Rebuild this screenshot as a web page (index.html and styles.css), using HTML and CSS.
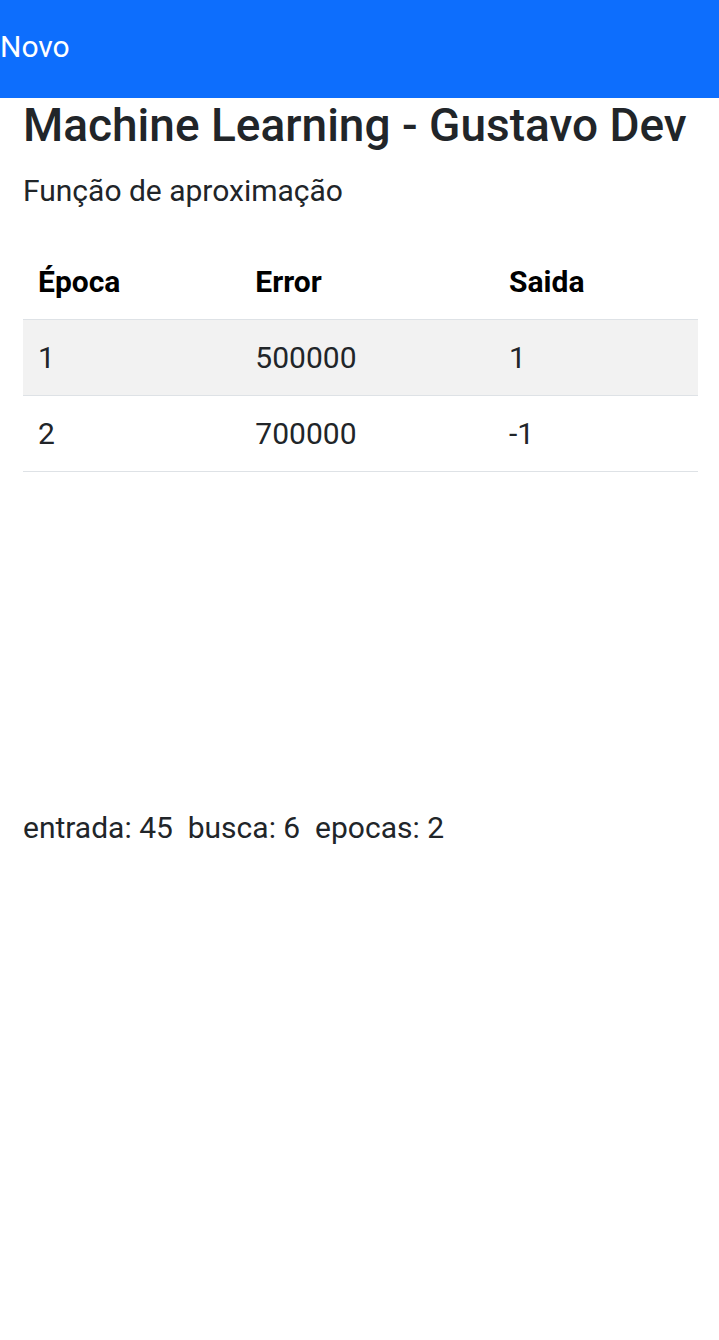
FILE: index.html
```html
<!DOCTYPE html>
<html lang="pt">
<head>
    <meta charset="utf-8">
    <link rel="stylesheet" href="styles.css">
</head>
<body>
<button class="btn-novo" id="btn-novo">Novo</button>
<div class="container">
    <h1 class="title">Machine Learning - Gustavo Dev</h1>
    <p class="subtitle">Função de aproximação</p>
    <table class="epoch-table">
        <thead>
            <tr>
                <th>Época</th>
                <th>Error</th>
                <th>Saida</th>
            </tr>
        </thead>
        <tbody>
            <tr>
                <td>1</td>
                <td>500000</td>
                <td>1</td>
            </tr>
            <tr>
                <td>2</td>
                <td>700000</td>
                <td>-1</td>
            </tr>
        </tbody>
    </table>
    <div class="chart-area"></div>
    <p class="params">entrada: 45&nbsp; busca: 6&nbsp; epocas: 2</p>
</div>
</body>
</html>
```

FILE: styles.css
```css
body {
    margin: 0;
    font-family: Roboto, "Liberation Sans", sans-serif;
    color: #212529;
    background-color: #fff;
}

.btn-novo {
    display: block;
    box-sizing: border-box;
    width: 100%;
    margin: 0;
    padding: 24px 0 29px 0;
    border: none;
    background-color: #0d6efd;
    color: #fff;
    font-family: Roboto, "Liberation Sans", sans-serif;
    font-size: 30px;
    line-height: 45px;
    text-align: left;
}

.container {
    padding: 0 21px 0 23px;
}

.title {
    margin: 0;
    font-size: 46px;
    font-weight: 500;
    line-height: 1.2;
}

.subtitle {
    margin: 15px 0 0 0;
    font-size: 30px;
    line-height: 1.5;
}

.epoch-table {
    width: 100%;
    margin-top: 31px;
    border-collapse: collapse;
    font-size: 30px;
    line-height: 1.5;
}

.epoch-table th {
    text-align: left;
    color: #000;
    font-weight: bold;
    padding: 15px;
    border-bottom: 1px solid #dee2e6;
}

.epoch-table td {
    padding: 15px;
    border-bottom: 1px solid #dee2e6;
}

.epoch-table tbody tr:nth-child(odd) {
    background-color: #f2f2f2;
}

.chart-area {
    height: 333px;
}

.params {
    margin: 0;
    font-size: 30px;
    line-height: 1.5;
}
```
